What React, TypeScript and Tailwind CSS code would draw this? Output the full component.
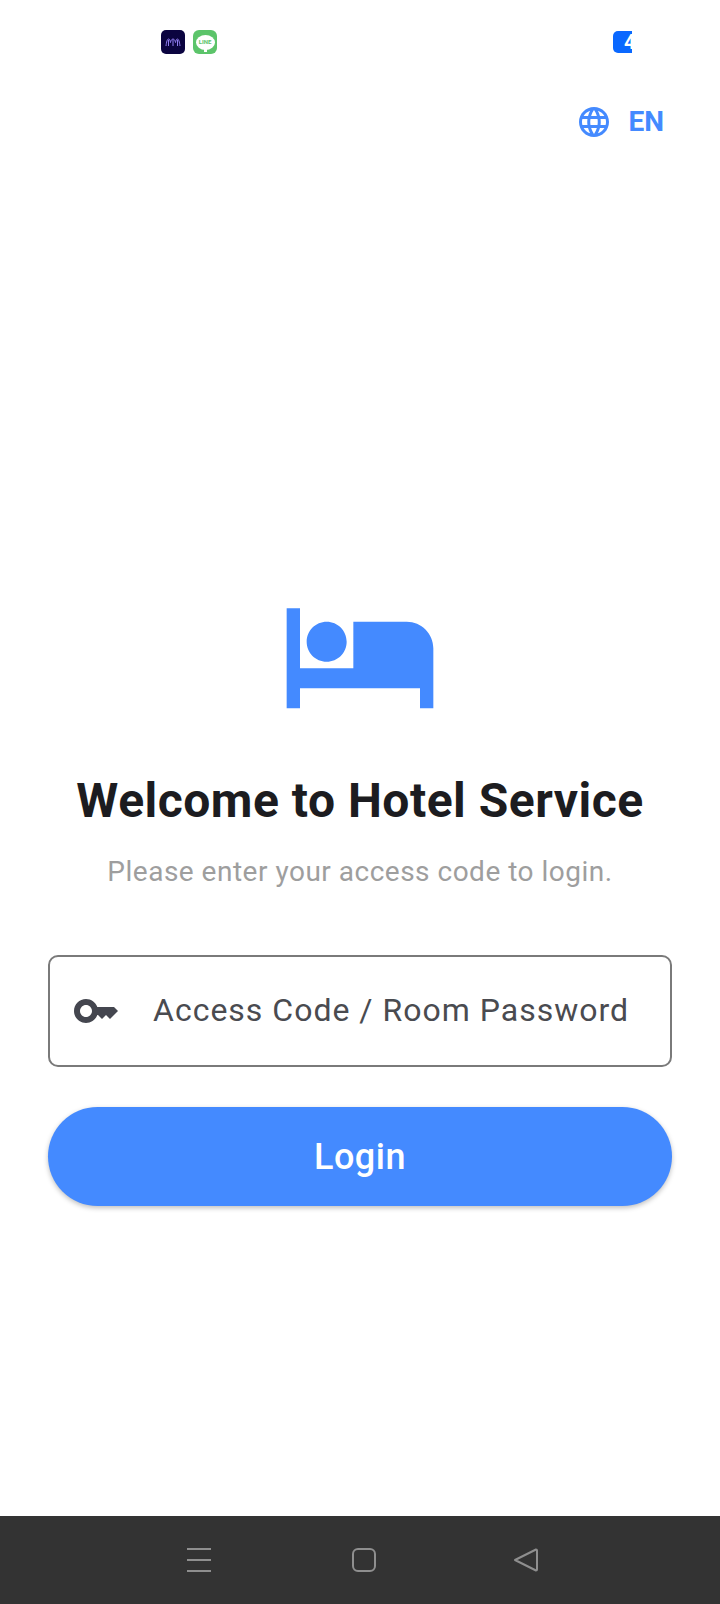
const roboto = "font-['Roboto',sans-serif]";

function MoonTile() {
  return (
    <div className="flex h-6 w-6 items-center justify-center rounded-[5px] bg-[#0b0440]">
      <svg viewBox="0 0 24 24" className="h-6 w-6" fill="none" stroke="#8f7cf0" strokeWidth="1">
        <path d="M5 16c.5-4 1.200-7 2.500-7s1.700 2 2 3.500c.3-1.500 1-3.500 2.500-3.500s2.200 2 2.500 3.500c.3-1.500.8-3.500 2-3.500s2 3 2.500 7" />
        <path d="M7.500 10v6M12 10v6M16.500 10v6" />
      </svg>
    </div>
  );
}

function LineTile() {
  return (
    <div className="flex h-6 w-6 items-center justify-center rounded-[6px] bg-[#5cc46a]">
      <div className="relative flex h-[15px] w-[19px] items-center justify-center rounded-[50%] bg-white">
        <span className="text-[6px] leading-none font-bold text-[#5cc46a] font-['Roboto',sans-serif]">LINE</span>
        <div className="absolute -bottom-[2px] left-[8px] h-[4px] w-[3px] bg-white" />
      </div>
    </div>
  );
}

function StatusBar() {
  return (
    <div className="flex h-[83px] items-start pt-[30px] pl-[161px]">
      <div className="flex gap-2">
        <MoonTile />
        <LineTile />
      </div>
      <div className="ml-[396px] mt-[1px] flex h-[22px] w-[19px] items-center overflow-hidden rounded-l-[5px] bg-[#0a68ff] pl-[11px]">
        <span className={`text-[20px] leading-none font-bold text-white ${roboto}`}>4</span>
      </div>
    </div>
  );
}

function LanguageRow() {
  return (
    <div className="flex h-[78px] items-center justify-end gap-[16px] pr-[56px] text-[#448aff]">
      <svg viewBox="0 0 24 24" className="h-9 w-9" fill="currentColor">
        <path d="M11.99 2C6.47 2 2 6.48 2 12s4.47 10 9.99 10C17.52 22 22 17.52 22 12S17.52 2 11.99 2zm6.93 6h-2.95c-.32-1.25-.78-2.45-1.38-3.56 1.84.63 3.37 1.91 4.33 3.56zM12 4.040c.83 1.2 1.48 2.53 1.91 3.96h-3.82c.43-1.43 1.08-2.76 1.91-3.96zM4.260 14C4.100 13.36 4 12.69 4 12s.1-1.36.26-2h3.38c-.08.66-.14 1.32-.14 2 0 .68.06 1.34.14 2H4.260zm.82 2h2.950c.32 1.25.78 2.45 1.38 3.56-1.84-.63-3.37-1.9-4.33-3.56zm2.950-8H5.080c.96-1.66 2.49-2.93 4.33-3.56C8.810 5.550 8.350 6.750 8.030 8zM12 19.960c-.83-1.2-1.48-2.53-1.91-3.96h3.820c-.43 1.43-1.08 2.76-1.91 3.96zM14.340 14H9.660c-.09-.66-.16-1.32-.16-2 0-.68.07-1.35.16-2h4.680c.09.65.16 1.32.16 2 0 .68-.07 1.34-.16 2zm.25 5.560c.6-1.11 1.06-2.31 1.38-3.56h2.950c-.96 1.65-2.49 2.93-4.330 3.56zM16.360 14c.08-.66.14-1.32.14-2 0-.68-.06-1.34-.14-2h3.380c.16.64.26 1.31.26 2s-.1 1.36-.26 2h-3.380z" />
      </svg>
      <span className={`text-[28px] leading-none font-bold ${roboto}`}>EN</span>
    </div>
  );
}

function LoginForm() {
  return (
    <div className="flex flex-col items-center px-12 pt-[414px]">
      <svg viewBox="0 0 24 24" className="h-40 w-40 text-[#448aff]" fill="currentColor">
        <path d="M7 13c1.66 0 3-1.34 3-3S8.66 7 7 7s-3 1.34-3 3 1.34 3 3 3zm12-6h-8v7H3V5H1v15h2v-3h18v3h2v-9c0-2.21-1.79-4-4-4z" />
      </svg>
      <h1 className={`mt-[38px] text-[48px] leading-[56px] font-bold tracking-[0.5px] text-[#1c1c20] whitespace-nowrap ${roboto}`}>
        Welcome to Hotel Service
      </h1>
      <p className={`mt-[25px] text-[28px] leading-[36px] tracking-[0.5px] text-[#9e9e9e] whitespace-nowrap ${roboto}`}>
        Please enter your access code to login.
      </p>
      <div className="mt-[65px] flex h-[112px] w-full items-center rounded-[10px] border-2 border-[#7a7a7a] pl-[22px]">
        <svg viewBox="0 0 24 24" className="h-12 w-12 text-[#44464f]" fill="currentColor">
          <path d="M21 10h-8.35C11.83 7.67 9.61 6 7 6c-3.31 0-6 2.69-6 6s2.69 6 6 6c2.61 0 4.83-1.67 5.65-4H13l2 2 2-2 2 2 4-4.04L21 10zM7 15c-1.65 0-3-1.35-3-3s1.35-3 3-3 3 1.35 3 3-1.35 3-3 3z" />
        </svg>
        <span className={`ml-[33px] pb-[2px] text-[32px] leading-[40px] tracking-[1px] text-[#4a4b50] whitespace-nowrap ${roboto}`}>
          Access Code / Room Password
        </span>
      </div>
      <button
        type="button"
        className={`mt-[40px] flex h-[99px] w-full items-center justify-center rounded-full bg-[#448aff] text-[36px] font-medium tracking-[0.5px] text-white shadow-[0_2px_5px_rgba(0,0,0,0.25)] ${roboto}`}
      >
        Login
      </button>
    </div>
  );
}

function NavBar() {
  return (
    <div className="flex h-[88px] items-center bg-[#333333] pl-[186px] text-[#8f8f8f]">
      <svg viewBox="0 0 26 26" className="h-[26px] w-[26px]" fill="none" stroke="currentColor" strokeWidth="2">
        <path d="M1 2h24M1 13h24M1 24h24" />
      </svg>
      <svg viewBox="0 0 26 26" className="ml-[139px] h-[26px] w-[26px]" fill="none" stroke="currentColor" strokeWidth="2">
        <rect x="2" y="2" width="22" height="22" rx="5" />
      </svg>
      <svg viewBox="0 0 26 26" className="ml-[136px] h-[26px] w-[26px]" fill="none" stroke="currentColor" strokeWidth="2" strokeLinejoin="round">
        <path d="M2 13L23 2.500c.5 0 1 .5 1 1v19c0 .5-.5 1-1 1L2 13z" />
      </svg>
    </div>
  );
}

export default function App() {
  return (
    <div className="flex h-[1604px] w-[720px] flex-col bg-white">
      <StatusBar />
      <LanguageRow />
      <div className="flex-1">
        <LoginForm />
      </div>
      <NavBar />
    </div>
  );
}
